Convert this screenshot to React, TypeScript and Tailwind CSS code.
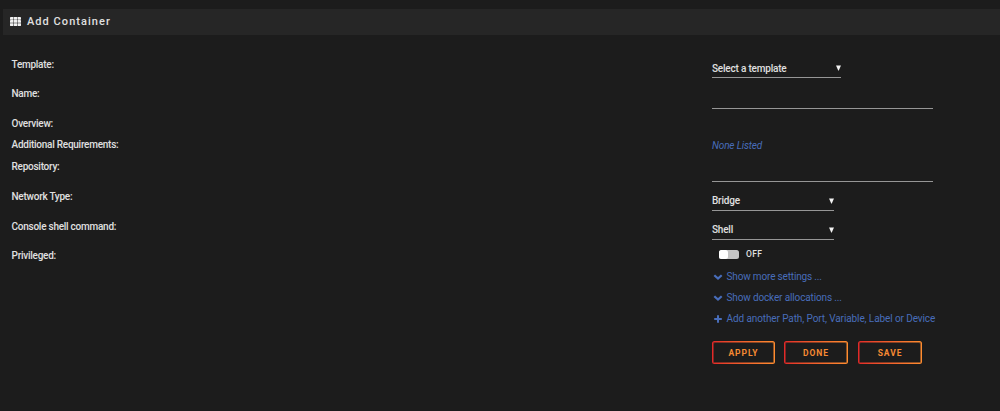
import type { ReactNode } from "react";

interface FieldRowProps {
  label: string;
  // Row height class, plus any nudge for the label's baseline.
  height: string;
  labelClass?: string;
  children?: ReactNode;
}

function FieldRow({ label, height, labelClass = "", children }: FieldRowProps) {
  return (
    <div className={`flex ${height}`}>
      <div className="-ml-[0.5px] mr-[0.5px] flex w-[700px] shrink-0 items-center">
        <label className={`whitespace-nowrap leading-none tracking-[-0.25px] ${labelClass}`}>
          {label}
        </label>
      </div>
      <div className="flex flex-1 items-end">{children}</div>
    </div>
  );
}

interface SelectFieldProps {
  value: string;
  width: string;
  contentClass?: string;
}

function SelectField({ value, width, contentClass = "" }: SelectFieldProps) {
  return (
    <button
      type="button"
      className={`flex h-[20px] items-center justify-between border-b border-[#969696] text-left ${width} ${contentClass}`}
    >
      <span className="whitespace-nowrap tracking-[-0.2px]">{value}</span>
      <svg viewBox="0 0 5 6" className="h-[6px] w-[5px] fill-[#f2f2f2]" aria-hidden>
        <path d="M0 0.5h5L2.5 6z" />
      </svg>
    </button>
  );
}

function TextField({ label }: { label: string }) {
  return (
    <input
      aria-label={label}
      className="h-[20px] w-[221px] border-b border-[#969696] bg-transparent outline-none"
    />
  );
}

interface ActionLinkProps {
  icon: ReactNode;
  className: string;
  children: ReactNode;
}

function ActionLink({ icon, className, children }: ActionLinkProps) {
  return (
    <a className="flex h-[21.2px] items-center gap-1 whitespace-nowrap font-normal text-[#486dba]">
      {icon}
      <span className={className}>{children}</span>
    </a>
  );
}

function ChevronIcon() {
  return (
    <svg viewBox="0 0 10 8" className="h-2 w-[10px] fill-none stroke-current" aria-hidden>
      <path d="M1.3 2.2 5 5.6 8.7 2.2" strokeWidth="2.2" />
    </svg>
  );
}

function PlusIcon() {
  return (
    <svg viewBox="0 0 10 8" className="h-2 w-[10px] fill-none stroke-current" aria-hidden>
      <path d="M5 0.2v7.6M1.2 4h7.6" strokeWidth="2" />
    </svg>
  );
}

function ActionButton({ children, width }: { children: string; width: string }) {
  return (
    <button
      type="button"
      className={`h-[23px] rounded-[2.5px] bg-linear-to-r from-[#e22828] to-[#ff8c2f] p-px ${width}`}
    >
      <span className="flex h-full items-center justify-center rounded-[1.5px] border border-[#1c1c1c]/50 bg-[#1c1c1c] bg-clip-padding pt-[2px] text-[8.5px] font-bold tracking-[0.95px] text-[#f68a33]">
        {children}
      </span>
    </button>
  );
}

function GridIcon() {
  return (
    <svg viewBox="0 0 11 9" className="mb-px h-[9px] w-[11px] fill-[#f2f2f2]" aria-hidden>
      {[0, 3.1, 6.2].map((y) =>
        [0, 3.8, 7.6].map((x) => (
          <rect key={`${x}-${y}`} x={x} y={y} width="3.4" height="2.7" rx="0.4" />
        )),
      )}
    </svg>
  );
}

export default function App() {
  return (
    <main className="h-[411px] overflow-hidden bg-[#1c1c1c] pt-[9px] font-['Roboto','Liberation_Sans',sans-serif] text-[10px] font-medium text-[#e0e0e0]">
      <header className="ml-[3px] flex h-[26px] items-center gap-[6px] bg-[#262626] pl-[7px]">
        <GridIcon />
        <h1 className="pb-[2px] text-[11px] leading-none tracking-[1.05px]">Add Container</h1>
      </header>

      <form className="pl-3 pt-[15px]">
        <FieldRow label="Template:" height="h-[28px]" labelClass="pt-[2px]">
          <SelectField value="Select a template" width="w-[129px]" contentClass="pt-px" />
        </FieldRow>
        <FieldRow label="Name:" height="h-[31px]">
          <TextField label="Name" />
        </FieldRow>
        <FieldRow label="Overview:" height="h-[27px]" labelClass="pt-[2px]" />
        <FieldRow label="Additional Requirements:" height="h-[18px]">
          <em className="pb-px font-normal tracking-[-0.15px] text-[#486dba]">None Listed</em>
        </FieldRow>
        <FieldRow label="Repository:" height="h-[28px]" labelClass="pb-[2px]">
          <TextField label="Repository" />
        </FieldRow>
        <FieldRow label="Network Type:" height="h-[29px]">
          <SelectField value="Bridge" width="w-[122px]" />
        </FieldRow>
        <FieldRow label="Console shell command:" height="h-[29px]" labelClass="pt-[2px]">
          <SelectField value="Shell" width="w-[122px]" />
        </FieldRow>
        <FieldRow label="Privileged:" height="h-[26px]" labelClass="pt-[5px]">
          <div className="flex h-full items-center gap-[7px] pl-[7px] pt-[2px]">
            <span className="flex h-[9px] w-5 rounded-[2.5px] bg-[#c4c4c4]">
              <span className="h-full w-[9px] rounded-[2.5px] bg-white" />
            </span>
            <span className="text-[8.5px] leading-none tracking-[0.3px]">OFF</span>
          </div>
        </FieldRow>

        <div className="ml-[700.5px]">
          <ActionLink icon={<ChevronIcon />} className="tracking-[-0.16px]">
            Show more settings ...
          </ActionLink>
          <ActionLink icon={<ChevronIcon />} className="tracking-[-0.14px]">
            Show docker allocations ...
          </ActionLink>
          <ActionLink icon={<PlusIcon />} className="tracking-[-0.1px]">
            Add another Path, Port, Variable, Label or Device
          </ActionLink>
        </div>

        <div className="ml-[700px] mt-[11.4px] flex">
          <ActionButton width="mr-[9px] w-[63px]">APPLY</ActionButton>
          <ActionButton width="mr-[10px] w-[64px]">DONE</ActionButton>
          <ActionButton width="w-[64px]">SAVE</ActionButton>
        </div>
      </form>
    </main>
  );
}
